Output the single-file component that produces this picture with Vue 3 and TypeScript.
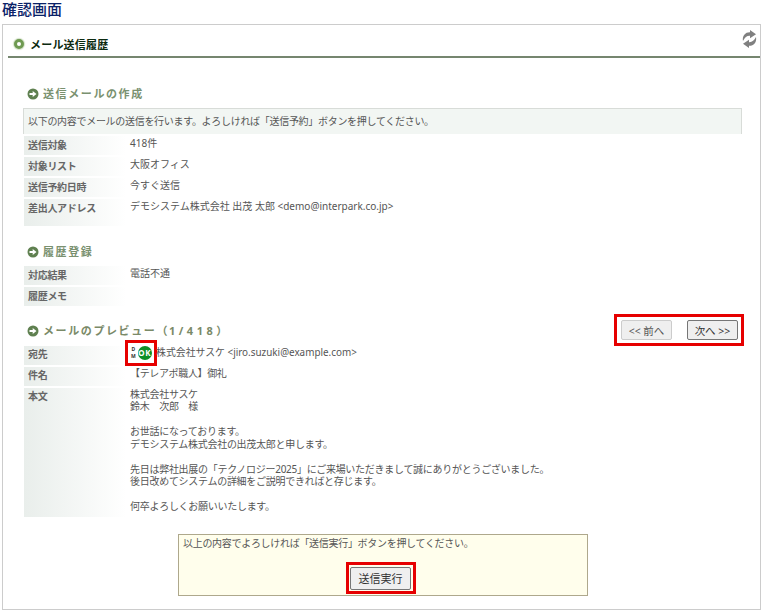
<script setup lang="ts">
interface Row { label: string; value: string; tall?: boolean }
const sendRows: Row[] = [
  { label: '送信対象', value: '418件' },
  { label: '対象リスト', value: '大阪オフィス' },
  { label: '送信予約日時', value: '今すぐ送信' },
  { label: '差出人アドレス', value: 'デモシステム株式会社 出茂 太郎 <demo@interpark.co.jp>', tall: true },
]
const historyRows: Row[] = [
  { label: '対応結果', value: '電話不通' },
  { label: '履歴メモ', value: '' },
]
const body = `株式会社サスケ
鈴木　次郎　様

お世話になっております。
デモシステム株式会社の出茂太郎と申します。

先日は弊社出展の「テクノロジー2025」にご来場いただきまして誠にありがとうございました。
後日改めてシステムの詳細をご説明できればと存じます。

何卒よろしくお願いいたします。`
</script>

<template>
  <div class="page">
    <h1 class="title">確認画面</h1>
    <div class="panel">
      <div class="panel-head">
        <span class="dot"></span>
        <span class="panel-title">メール送信履歴</span>
        <svg class="refresh" width="15" height="18" viewBox="0 0 15 18">
          <path d="M1 11C0 5.500 3.500 2 8 2.200V0l6 4.200-6 4V5.800C5 5.600 2.800 7.500 1 11Z" fill="#808080" />
          <path d="M14 7c1 5.500-2.500 9-7 8.800V18l-6-4.200 6-4v2.400c3 .2 5.200-1.700 7-5.200Z" fill="#808080" />
        </svg>
      </div>

      <div class="content">
        <h2 class="section first">
          <svg class="arrow" width="12" height="12" viewBox="0 0 12 12"><circle cx="6" cy="6" r="5.500" fill="#5f8050" /><path d="M2.500 5h3.200V3L9.500 6 5.700 9V7H2.500Z" fill="#fff" /></svg>
          送信メールの作成
        </h2>
        <div class="notice">以下の内容でメールの送信を行います。よろしければ「送信予約」ボタンを押してください。</div>
        <div class="rows">
          <div v-for="r in sendRows" :key="r.label" class="row" :class="{ tall: r.tall }">
            <div class="label">{{ r.label }}</div>
            <div class="value">{{ r.value }}</div>
          </div>
        </div>

        <h2 class="section second">
          <svg class="arrow" width="12" height="12" viewBox="0 0 12 12"><circle cx="6" cy="6" r="5.500" fill="#5f8050" /><path d="M2.500 5h3.200V3L9.500 6 5.700 9V7H2.500Z" fill="#fff" /></svg>
          履歴登録
        </h2>
        <div class="rows">
          <div v-for="r in historyRows" :key="r.label" class="row">
            <div class="label">{{ r.label }}</div>
            <div class="value">{{ r.value }}</div>
          </div>
        </div>

        <div class="preview-head">
          <h2 class="section third">
            <svg class="arrow" width="12" height="12" viewBox="0 0 12 12"><circle cx="6" cy="6" r="5.500" fill="#5f8050" /><path d="M2.500 5h3.200V3L9.500 6 5.700 9V7H2.500Z" fill="#fff" /></svg>
            <span>メールのプレビュー（<span class="nums">1/418</span>）</span>
          </h2>
          <div class="pager red">
            <button class="btn prev">&lt;&lt; 前へ</button>
            <button class="btn next">次へ &gt;&gt;</button>
          </div>
        </div>
        <div class="rows preview-rows">
          <div class="row to-row">
            <div class="label">宛先</div>
            <div class="value to">
              <span class="dm-wrap red">
                <span class="dm">D<br />M</span>
                <span class="ok">OK</span>
              </span>
              <span class="to-text">株式会社サスケ &lt;jiro.suzuki@example.com&gt;</span>
            </div>
          </div>
          <div class="row">
            <div class="label">件名</div>
            <div class="value subject">【テレアポ職人】御礼</div>
          </div>
          <div class="row body-row">
            <div class="label">本文</div>
            <div class="value body-text">{{ body }}</div>
          </div>
        </div>

        <div class="confirm">
          <p class="confirm-text">以上の内容でよろしければ「送信実行」ボタンを押してください。</p>
          <div class="confirm-action">
            <span class="submit-wrap red"><button class="btn submit">送信実行</button></span>
          </div>
        </div>
      </div>
    </div>
  </div>
</template>

<style>
html, body { margin: 0; background: #fff; }
</style>

<style scoped>
.page {
  width: 765px;
  height: 615px;
  overflow: hidden;
  font-family: "Noto Sans", "Noto Sans CJK JP", sans-serif;
  font-size: 10px;
  color: #555;
}
.title {
  margin: 0;
  padding-left: 2px;
  height: 24px;
  font-size: 15px;
  line-height: 18px;
  font-weight: 500;
  color: #0a2268;
}
.panel {
  margin-left: 2px;
  width: 759px;
  height: 586px;
  border: 1px solid #ccc;
  box-sizing: border-box;
}
.panel-head {
  margin-left: 5px;
  height: 25px;
  border-bottom: 2px solid #75866f;
  display: flex;
  align-items: center;
  padding: 6px 0 0 6px;
  position: relative;
}
.dot {
  flex: none;
  width: 4px;
  height: 4px;
  border-radius: 50%;
  background: #fff;
  border: 3px solid #6f9a52;
  box-shadow: 0 0 1px 1px #d3e2c8;
}
.panel-title {
  margin-left: 6px;
  font-size: 11px;
  letter-spacing: .2px;
  font-weight: 700;
  color: #0c2a10;
}
.refresh { position: absolute; right: 3px; top: 5px; }
.content { padding: 0 18px 0 20px; }
.section {
  margin: 0;
  display: flex;
  align-items: center;
  gap: 4px;
  font-size: 11px;
  line-height: 16px;
  font-weight: 700;
  letter-spacing: 1.6px;
  color: #7a9170;
  padding-left: 4px;
}
.section.first { padding-top: 28px; margin-bottom: 6px; }
.section.second { padding-top: 18px; margin-bottom: 6px; }
.section.third { padding-top: 2px; color: #7a8a68; }
.nums { letter-spacing: 3.500px; }
.arrow { flex: none; }
.notice {
  height: 26px;
  border: 1px solid #d8dcd8;
  border-bottom: 0;
  background: #f2f6f3;
  line-height: 24px;
  padding-left: 4px;
  box-sizing: border-box;
  letter-spacing: -.3px;
}
.rows { display: flex; flex-direction: column; gap: 2px; padding-left: 1px; }
.notice + .rows { margin-top: 2px; }
.row { display: flex; min-height: 19px; }
.row.tall { min-height: 27px; }
.to-row { height: 19px; }
.label {
  width: 102px;
  flex: none;
  background: linear-gradient(90deg, #e9eeeb, #fff);
  font-weight: 700;
  color: #666;
  padding: 2px 0 0 4px;
  box-sizing: border-box;
  line-height: 15px;
  letter-spacing: -.3px;
}
.preview-rows .label { padding-top: 1px; }
.value {
  padding-left: 4px;
  line-height: 15px;
}
.preview-head {
  margin-top: 8px;
  height: 32px;
  display: flex;
  justify-content: space-between;
  align-items: center;
}
.pager {
  display: flex;
  gap: 15px;
  align-items: center;
  width: 130px;
  height: 32px;
  padding-left: 4px;
  margin-right: -2px;
}
.red { border: 3px solid #e60000; box-sizing: border-box; }
.btn {
  font-family: inherit;
  font-size: 10.500px;
  color: #333;
  background: #efefef;
  border: 1px solid #767676;
  border-radius: 2px;
  padding: 0;
  height: 20px;
  flex: none;
}
.btn.prev { width: 51px; border-color: #ccc; color: #555; }
.btn.next { width: 51px; }
.to { display: flex; padding-left: 0; }
.dm-wrap {
  width: 32px;
  height: 26px;
  margin: -6px 0 0 -1px;
  display: flex;
  align-items: center;
  padding-left: 3px;
  gap: 2px;
  flex: none;
}
.dm {
  font-size: 5px;
  line-height: 7px;
  font-weight: 700;
  color: #333;
  text-align: center;
}
.ok {
  flex: none;
  width: 14px;
  height: 14px;
  border-radius: 50%;
  background: #0c8f26;
  color: #fff;
  font-size: 8px;
  font-weight: 700;
  letter-spacing: .6px;
  line-height: 14px;
  text-align: center;
}
.to-text { margin: -1px 0 0 -1px; font-size: 9.900px; }
.subject { margin-top: -1px; letter-spacing: -.35px; }
.body-row .label { height: 129px; }
.body-text { white-space: pre-line; line-height: 12.450px; letter-spacing: -.28px; }
.confirm {
  margin: 17px 0 0 155px;
  width: 410px;
  height: 62px;
  border: 1px solid #aea88c;
  background: #fffeec;
  box-sizing: border-box;
  padding: 0 4px;
}
.confirm-text { margin: 0; line-height: 16px; letter-spacing: -.3px; }
.confirm-action { display: flex; justify-content: center; margin-top: 11px; padding-right: 5px; }
.submit-wrap { width: 70px; height: 32px; display: flex; align-items: center; justify-content: center; }
.btn.submit { width: 61px; height: 23px; font-size: 11px; }
</style>
